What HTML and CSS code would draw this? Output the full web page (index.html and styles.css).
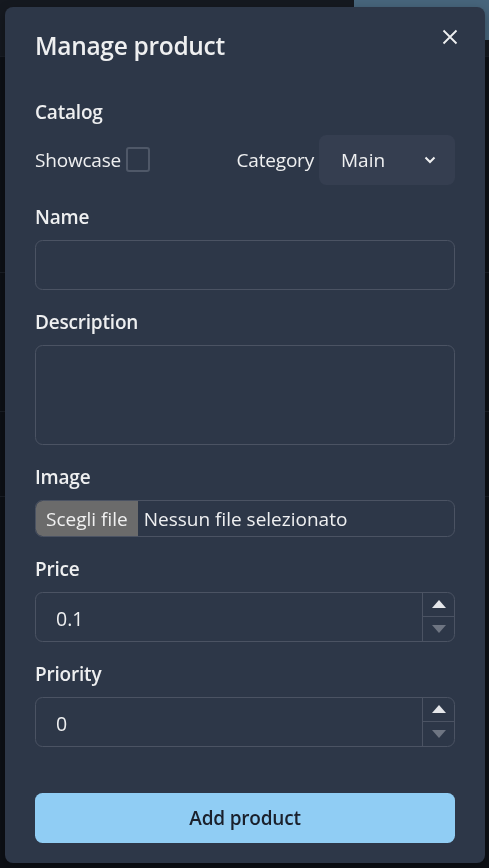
FILE: index.html
```html
<!DOCTYPE html>
<html lang="en">
<head>
<meta charset="utf-8">
<title>Manage product</title>
<link rel="stylesheet" href="styles.css">
</head>
<body>
<div class="page">
  <div class="topbar"><div class="top-btn"></div></div>
  <div class="rows">
    <div class="row r1"></div>
    <div class="row r2"></div>
    <div class="row r3"></div>
  </div>
</div>
<div class="overlay">
  <section class="modal">
    <header class="modal-header">
      <h2 class="title">Manage product</h2>
      <button class="close" aria-label="Close">
        <svg width="16" height="16" viewBox="0 0 16 16"><path d="M1.5 1.5 L14.5 14.5 M14.5 1.5 L1.5 14.5" stroke="rgba(255,255,255,0.92)" stroke-width="1.8" fill="none"/></svg>
      </button>
    </header>
    <div class="modal-body">
      <div class="field">
        <div class="label">Catalog</div>
        <div class="catalog-row">
          <div class="showcase">
            <span class="plain">Showcase</span>
            <span class="checkbox"></span>
          </div>
          <div class="category">
            <span class="plain">Category</span>
            <div class="select">
              <span>Main</span>
              <svg width="12" height="8" viewBox="0 0 12 8"><path d="M1.5 1.5 L6 6 L10.5 1.5" stroke="rgba(255,255,255,0.92)" stroke-width="2" fill="none"/></svg>
            </div>
          </div>
        </div>
      </div>
      <div class="field">
        <div class="label">Name</div>
        <div class="input"></div>
      </div>
      <div class="field">
        <div class="label">Description</div>
        <div class="input textarea"></div>
      </div>
      <div class="field">
        <div class="label">Image</div>
        <div class="file">
          <span class="file-btn">Scegli file</span>
          <span class="file-text">Nessun file selezionato</span>
        </div>
      </div>
      <div class="field">
        <div class="label">Price</div>
        <div class="input number">
          <span class="value">0.1</span>
          <div class="stepper">
            <div class="step up"><span class="tri-up"></span></div>
            <div class="step down"><span class="tri-down"></span></div>
          </div>
        </div>
      </div>
      <div class="field">
        <div class="label">Priority</div>
        <div class="input number">
          <span class="value">0</span>
          <div class="stepper">
            <div class="step up"><span class="tri-up"></span></div>
            <div class="step down"><span class="tri-down"></span></div>
          </div>
        </div>
      </div>
    </div>
    <footer class="modal-footer">
      <button class="submit">Add product</button>
    </footer>
  </section>
</div>
</body>
</html>
```

FILE: styles.css
```css
* { box-sizing: border-box; }
html, body { margin: 0; padding: 0; }
body {
  width: 489px;
  height: 868px;
  overflow: hidden;
  background: #0d1016;
  font-family: "Open Sans", "Noto Sans", sans-serif;
  color: rgba(255,255,255,0.92);
}
.page { position: relative; height: 868px; }
.topbar {
  height: 57px;
  background: #151920;
  border-bottom: 1px solid #1a1e26;
  display: flex;
  justify-content: flex-end;
}
.top-btn {
  width: 142px;
  height: 40px;
  margin-right: -7px;
  background: #47657c;
  border-radius: 0 0 8px 8px;
}
.rows { display: flex; flex-direction: column; }
.row { border-bottom: 1px solid #1a1e26; }
.r1 { height: 216px; }
.r2 { height: 139px; }
.r3 { height: 85px; }

.overlay {
  position: fixed;
  inset: 0;
  display: flex;
  justify-content: center;
  align-items: flex-start;
  padding-top: 7px;
}
.modal {
  width: 480px;
  margin-left: 1px;
  background: #2d3748;
  border-radius: 8px;
  display: flex;
  flex-direction: column;
  box-shadow: 0 4px 12px rgba(0,0,0,0.3);
}
.modal-header {
  position: relative;
  padding: 20px 30px;
}
.title {
  margin: 0;
  font-size: 24.5px;
  line-height: 37.5px;
  font-weight: 600;
  letter-spacing: -0.3px;
}
.close {
  position: absolute;
  top: 10px;
  right: 15px;
  width: 40px;
  height: 40px;
  border: 0;
  background: transparent;
  display: flex;
  align-items: center;
  justify-content: center;
  padding: 0;
}
.modal-body {
  padding: 10px 30px;
  display: flex;
  flex-direction: column;
  gap: 15px;
}
.field { display: flex; flex-direction: column; }
.label {
  font-size: 19px;
  line-height: 30px;
  padding-top: 2px;
  height: 30px;
  font-weight: 600;
  margin-bottom: 10px;
  letter-spacing: -0.2px;
}
.plain { font-size: 19px; letter-spacing: -0.2px; }
.catalog-row {
  display: flex;
  align-items: center;
  justify-content: space-between;
  height: 50px;
}
.showcase { display: flex; align-items: center; gap: 5px; }
.checkbox {
  width: 24px;
  height: 25px;
  border: 2px solid #4f5868;
  border-radius: 3px;
}
.category { display: flex; align-items: center; gap: 5px; }
.select {
  width: 136px;
  height: 50px;
  background: #353e50;
  border-radius: 7.5px;
  display: flex;
  align-items: center;
  justify-content: space-between;
  padding: 0 19px 0 22px;
  font-size: 19px;
}
.input {
  height: 50px;
  border: 1px solid #4b5363;
  border-radius: 7.5px;
}
.textarea { height: 100px; }
.file {
  height: 37px;
  border: 1px solid #4b5363;
  border-radius: 7.5px;
  display: flex;
  align-items: stretch;
  overflow: hidden;
  font-size: 19px;
}
.file-btn {
  background: #6b6b6b;
  color: #f0f0f0;
  display: flex;
  align-items: center;
  padding: 1px 10px 0 10px;
  border-radius: 6px 0 0 6px;
}
.file-text { display: flex; align-items: center; padding: 1px 0 0 6px; }
.number {
  display: flex;
  align-items: stretch;
}
.value {
  flex: 1;
  display: flex;
  align-items: center;
  padding: 3px 0 0 20px;
  font-size: 19.5px;
}
.stepper {
  width: 32px;
  border-left: 1px solid #4b5363;
  display: flex;
  flex-direction: column;
}
.step {
  flex: 1;
  display: flex;
  align-items: center;
  justify-content: center;
}
.step.up { border-bottom: 1px solid #4b5363; }
.tri-up {
  width: 0; height: 0;
  border-left: 7px solid transparent;
  border-right: 7px solid transparent;
  border-bottom: 8px solid #e4e6ea;
}
.tri-down {
  width: 0; height: 0;
  border-left: 7px solid transparent;
  border-right: 7px solid transparent;
  border-top: 8px solid #6e7582;
}
.modal-footer {
  padding: 36px 30px 20px;
}
.submit {
  width: 100%;
  height: 50px;
  border: 0;
  border-radius: 7.5px;
  background: #90cdf4;
  color: #1a202c;
  font-family: inherit;
  font-size: 19px;
  font-weight: 600;
  letter-spacing: -0.2px;
  padding-top: 2px;
}
```
